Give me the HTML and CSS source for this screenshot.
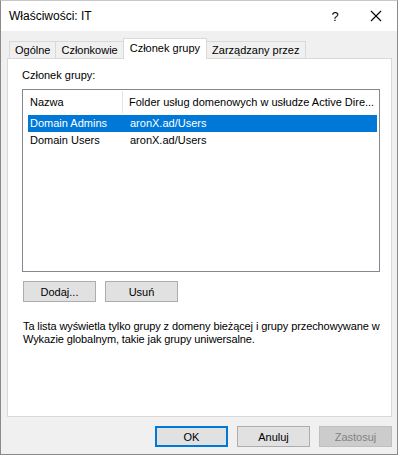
FILE: index.html
```html
<!DOCTYPE html>
<html lang="pl">
<head>
<meta charset="utf-8">
<title>Właściwości: IT</title>
<link rel="stylesheet" href="styles.css">
</head>
<body>
<div class="window">
  <div class="titlebar">
    <span class="title">Właściwości: IT</span>
    <span class="help">?</span>
    <span class="close">
      <svg width="12" height="12" viewBox="0 0 12 12"><path d="M1 1 L11 11 M11 1 L1 11" stroke="#000" stroke-width="1.1" fill="none"/></svg>
    </span>
  </div>
  <div class="content">
    <div class="tabs">
      <div class="tab">Ogólne</div>
      <div class="tab">Członkowie</div>
      <div class="tab active">Członek grupy</div>
      <div class="tab">Zarządzany przez</div>
    </div>
    <div class="panel">
      <div class="label">Członek grupy:</div>
      <div class="list">
        <div class="list-header">
          <div class="col1">Nazwa</div>
          <div class="col2">Folder usług domenowych w usłudze Active Dire...</div>
        </div>
        <div class="row selected"><div class="c1">Domain Admins</div><div class="c2">aronX.ad/Users</div></div>
        <div class="row"><div class="c1">Domain Users</div><div class="c2">aronX.ad/Users</div></div>
      </div>
      <div class="actions">
        <button class="btn">Dodaj...</button>
        <button class="btn">Usuń</button>
      </div>
      <p class="note">Ta lista wyświetla tylko grupy z domeny bieżącej i grupy przechowywane w Wykazie globalnym, takie jak grupy uniwersalne.</p>
    </div>
    <div class="footer">
      <button class="btn default">OK</button>
      <button class="btn">Anuluj</button>
      <button class="btn disabled">Zastosuj</button>
    </div>
  </div>
</div>
</body>
</html>
```
FILE: styles.css
```css
html, body {
  margin: 0;
  padding: 0;
  background: #ffffff;
}
body {
  font-family: "Liberation Sans", Arial, sans-serif;
  font-size: 11px;
  color: #000;
}
.window {
  width: 396px;
  height: 453px;
  border: 1px solid #8a8a8a;
  border-top-color: #c8c8c8;
  background: #f0f0f0;
}
.titlebar {
  height: 30px;
  background: #fff;
  display: flex;
  align-items: center;
  font-size: 12px;
}
.title {
  margin-left: 8px;
  flex: 1;
}
.help {
  width: 20px;
  text-align: center;
  margin-right: 25px;
  font-size: 13px;
}
.close {
  width: 12px;
  height: 12px;
  margin-right: 15px;
  display: flex;
}
.content {
  padding: 7px 5px 0 6px;
}
.tabs {
  display: flex;
  align-items: flex-end;
  height: 20px;
  padding-left: 2px;
  position: relative;
  z-index: 1;
}
.tab {
  height: 17px;
  line-height: 17px;
  padding: 0 5px;
  border: 1px solid #d9d9d9;
  border-bottom: none;
  margin-right: -1px;
  background: #f0f0f0;
  box-sizing: border-box;
}
.tab.active {
  height: 21px;
  line-height: 19px;
  background: #fff;
  margin-bottom: -1px;
  padding: 0 6px;
  position: relative;
  z-index: 2;
}
.panel {
  box-sizing: border-box;
  height: 359px;
  border: 1px solid #d9d9d9;
  background: #fff;
  padding: 10px 11px 0 14px;
}
.label {
  height: 13px;
  line-height: 13px;
  margin-bottom: 7px;
}
.list {
  box-sizing: border-box;
  height: 183px;
  border: 1px solid #828790;
  background: #fff;
}
.list-header {
  display: flex;
  height: 23px;
  align-items: center;
  margin-bottom: 2px;
}
.col1 {
  width: 100px;
  padding-left: 7px;
  box-sizing: border-box;
  border-right: 1px solid #e5e5e5;
  height: 22px;
  line-height: 22px;
}
.col2 {
  padding-left: 6px;
  line-height: 22px;
  white-space: nowrap;
}
.row {
  display: flex;
  height: 17px;
  line-height: 17px;
  margin: 0 2px 0 5px;
}
.row.selected {
  background: #0078d7;
  color: #fff;
}
.c1 {
  width: 100px;
  padding-left: 2px;
  box-sizing: border-box;
}
.c2 {
  padding-left: 2px;
}
.actions {
  display: flex;
  gap: 9px;
  margin: 9px 0 0 1px;
}
.btn {
  font-family: inherit;
  font-size: 11px;
  color: #000;
  width: 73px;
  height: 21px;
  background: #e1e1e1;
  border: 1px solid #adadad;
  padding: 0;
  margin: 0;
}
.note {
  margin: 18px -6px 0 1px;
  line-height: 13px;
  letter-spacing: -0.1px;
}
.footer {
  display: flex;
  justify-content: flex-end;
  gap: 9px;
  margin-top: 9px;
}
.btn.default {
  border: 2px solid #0078d7;
}
.btn.disabled {
  background: #cccccc;
  border-color: #bfbfbf;
  color: #838383;
}
```
